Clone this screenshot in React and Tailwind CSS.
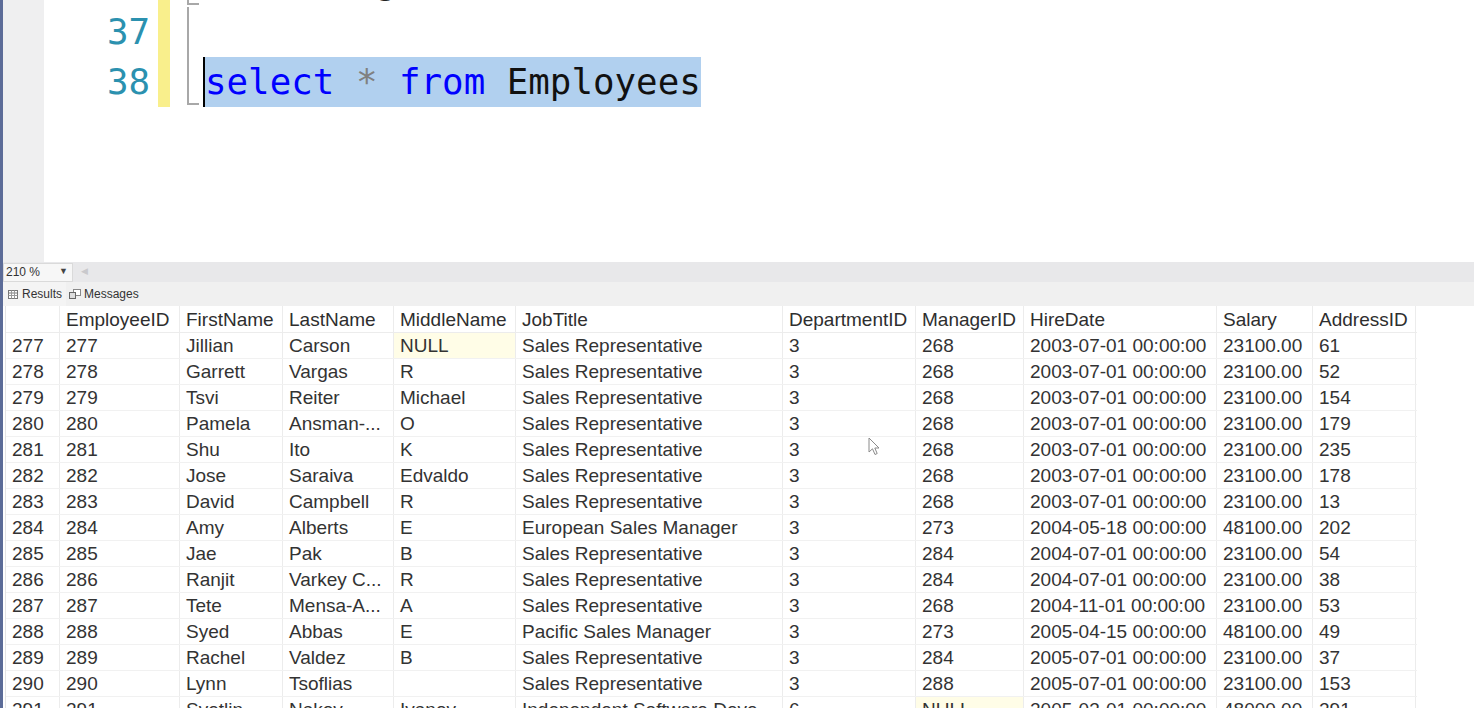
import React from 'react';

const cols = [
  { key: 'n', label: '', w: 54 },
  { key: 'id', label: 'EmployeeID', w: 120 },
  { key: 'first', label: 'FirstName', w: 103 },
  { key: 'last', label: 'LastName', w: 111 },
  { key: 'middle', label: 'MiddleName', w: 122 },
  { key: 'job', label: 'JobTitle', w: 267 },
  { key: 'dept', label: 'DepartmentID', w: 133 },
  { key: 'mgr', label: 'ManagerID', w: 108 },
  { key: 'hire', label: 'HireDate', w: 193 },
  { key: 'salary', label: 'Salary', w: 96 },
  { key: 'addr', label: 'AddressID', w: 103 },
];

const SR = 'Sales Representative';
const raw = [
  [277, 'Jillian', 'Carson', 'NULL', SR, 3, 268, '2003-07-01', '23100.00', 61],
  [278, 'Garrett', 'Vargas', 'R', SR, 3, 268, '2003-07-01', '23100.00', 52],
  [279, 'Tsvi', 'Reiter', 'Michael', SR, 3, 268, '2003-07-01', '23100.00', 154],
  [280, 'Pamela', 'Ansman-...', 'O', SR, 3, 268, '2003-07-01', '23100.00', 179],
  [281, 'Shu', 'Ito', 'K', SR, 3, 268, '2003-07-01', '23100.00', 235],
  [282, 'Jose', 'Saraiva', 'Edvaldo', SR, 3, 268, '2003-07-01', '23100.00', 178],
  [283, 'David', 'Campbell', 'R', SR, 3, 268, '2003-07-01', '23100.00', 13],
  [284, 'Amy', 'Alberts', 'E', 'European Sales Manager', 3, 273, '2004-05-18', '48100.00', 202],
  [285, 'Jae', 'Pak', 'B', SR, 3, 284, '2004-07-01', '23100.00', 54],
  [286, 'Ranjit', 'Varkey C...', 'R', SR, 3, 284, '2004-07-01', '23100.00', 38],
  [287, 'Tete', 'Mensa-A...', 'A', SR, 3, 268, '2004-11-01', '23100.00', 53],
  [288, 'Syed', 'Abbas', 'E', 'Pacific Sales Manager', 3, 273, '2005-04-15', '48100.00', 49],
  [289, 'Rachel', 'Valdez', 'B', SR, 3, 284, '2005-07-01', '23100.00', 37],
  [290, 'Lynn', 'Tsoflias', '', SR, 3, 288, '2005-07-01', '23100.00', 153],
  [291, 'Svetlin', 'Nakov', 'Ivanov', 'Independent Software Deve...', 6, 'NULL', '2005-03-01', '48000.00', 291],
];

const rows = raw.map(r => ({
  n: r[0], id: r[0], first: r[1], last: r[2], middle: r[3], job: r[4],
  dept: r[5], mgr: r[6], hire: r[7] + ' 00:00:00', salary: r[8], addr: r[9],
}));

const mono = { fontFamily: '"DejaVu Sans Mono", "Liberation Mono", monospace' };

function EditorLine({ num, bracketTick, children }) {
  return (
    <div className="flex h-[50px] items-stretch">
      <div className="w-[106px] text-right text-[35.8px] leading-[50px] text-[#2b91af]" style={mono}>{num}</div>
      <div className="w-[8px]" />
      <div className="w-[12px] bg-[#f9ef8c]" />
      <div className="w-[33px] flex">
        <div className={`ml-[17px] w-[12px] border-l-2 border-[#a8a8a8] ${bracketTick ? 'border-b-2 h-[48px]' : 'h-full'}`} />
      </div>
      <div className="text-[35.8px] leading-[50px] whitespace-pre" style={mono}>{children}</div>
    </div>
  );
}

function Cell({ w, children, nul, header }) {
  return (
    <div
      className={`shrink-0 h-full border-r border-[#ececec] pl-[6px] overflow-hidden whitespace-nowrap ${header ? 'leading-[28px] text-[#2e2e2e]' : 'leading-[26px] text-[#333333]'} ${nul ? 'bg-[#fffde7]' : ''}`}
      style={{ width: w }}
    >
      {children}
    </div>
  );
}

export default function App() {
  return (
    <div className="w-[1474px] h-[708px] overflow-hidden bg-white flex" style={{ fontFamily: '"Liberation Sans", Arial, sans-serif' }}>
      <div className="w-[3px] shrink-0 bg-[#5c6c98]" />
      <div className="flex-1 flex flex-col min-w-0">
        {/* editor */}
        <div className="h-[262px] shrink-0 flex overflow-hidden">
          <div className="w-[41px] bg-[#efeff0]" />
          <div className="flex-1 flex flex-col -mt-[43px]">
            <EditorLine num="36" bracketTick>
              <span className="text-[#222]">--listing</span>
            </EditorLine>
            <EditorLine num="37" />
            <EditorLine num="38" bracketTick>
              <span className="inline-block bg-[#b1d0ef] border-l-2 border-black leading-[50px]">
                <span className="text-[#0000ff]">select</span>
                <span> </span>
                <span className="text-[#808080]">*</span>
                <span> </span>
                <span className="text-[#0000ff]">from</span>
                <span className="text-[#111]"> Employees</span>
              </span>
            </EditorLine>
          </div>
        </div>

        {/* zoom bar */}
        <div className="h-[20px] shrink-0 bg-[#e8e8ea] flex items-center">
          <div className="w-[70px] h-[19px] bg-[#f7f7f7] border border-[#dadada] flex items-center justify-between px-[2px] text-[12px] text-[#333]">
            <span>210 %</span>
            <span className="text-[9px] text-[#444] pr-[2px]">▼</span>
          </div>
          <span className="ml-[8px] text-[9px] text-[#c9c9cc]">◀</span>
        </div>

        {/* tabs */}
        <div className="h-[24px] shrink-0 bg-[#f0f0f0] flex items-center text-[12px] text-[#333]">
          <div className="flex items-center gap-[4px] pl-[5px] pr-[4px] h-full bg-[#f4f4f4]">
            <svg width="10" height="9" viewBox="0 0 10 9">
              <rect x="0.5" y="0.5" width="9" height="8" fill="#fff" stroke="#777" />
              <line x1="0.5" y1="3" x2="9.5" y2="3" stroke="#777" />
              <line x1="0.5" y1="5.5" x2="9.5" y2="5.5" stroke="#999" />
              <line x1="3.5" y1="0.5" x2="3.5" y2="8.5" stroke="#999" />
              <line x1="6.5" y1="0.5" x2="6.5" y2="8.5" stroke="#999" />
            </svg>
            <span>Results</span>
          </div>
          <div className="flex items-center gap-[3px] pl-[3px]">
            <svg width="12" height="10" viewBox="0 0 12 10">
              <rect x="4.5" y="0.5" width="7" height="6" fill="#fff" stroke="#888" />
              <rect x="0.5" y="3.5" width="6" height="6" fill="#ddd" stroke="#666" />
            </svg>
            <span>Messages</span>
          </div>
        </div>

        {/* grid */}
        <div className="flex-1 pl-[2px] text-[19px] relative">
          <div className="border-l border-[#e4e4e4] w-[1412px]">
            <div className="h-[27px] flex border-b border-[#ececec]">
              {cols.map(c => (
                <Cell key={c.key} w={c.w} header>{c.label}</Cell>
              ))}
            </div>
            {rows.map(r => (
              <div key={r.n} className="h-[26px] flex border-b border-[#f1f1f1]">
                {cols.map(c => (
                  <Cell key={c.key} w={c.w} nul={r[c.key] === 'NULL'}>{r[c.key]}</Cell>
                ))}
              </div>
            ))}
          </div>
          <svg className="absolute left-[865px] top-[131px]" width="14" height="20" viewBox="0 0 14 20">
            <path d="M1 1 L1 15 L4.5 11.8 L7 17.5 L9.2 16.5 L6.8 11 L11 11 Z" fill="#fff" stroke="#8a8a8a" strokeWidth="1" strokeLinejoin="round" />
          </svg>
        </div>
      </div>
    </div>
  );
}
